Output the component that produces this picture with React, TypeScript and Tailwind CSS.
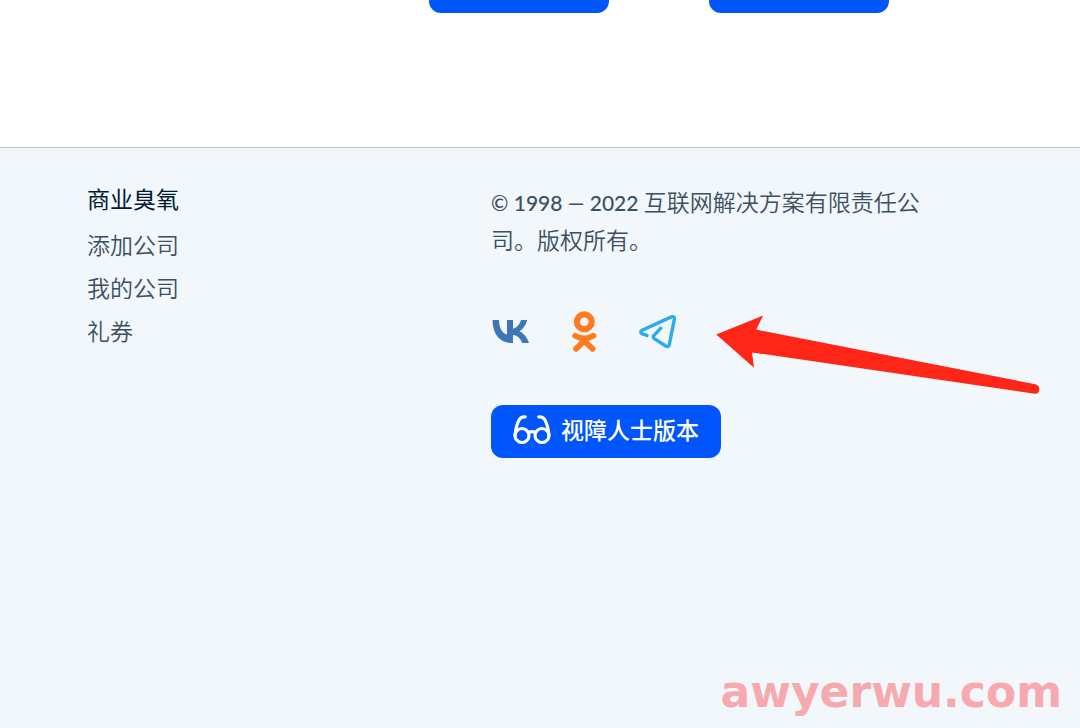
import React from "react";

const companyLinks = ["添加公司", "我的公司", "礼券"];

function VkIcon() {
  return (
    <svg viewBox="0 0 40 44" className="h-11 w-10" fill="#3f76b8" aria-hidden="true">
      <path d="M1.5 10H8C8.2 18.5 11.3 23.2 16 24.6V10h6v8.7C25.6 18 28.6 14.6 30 10h6.2c-1 4.8-4 8.9-7.7 11.2 4.4 2 7.8 6.2 9.5 11.8h-6.8c-1.5-4.3-4.8-7.4-9.2-7.9V33h-.8C9.5 33 1.8 25.2 1.5 10z" />
    </svg>
  );
}

function OkIcon() {
  return (
    <svg viewBox="0 0 40 44" className="h-11 w-10" fill="none" stroke="#ff7b22" strokeLinecap="round" strokeLinejoin="round" aria-hidden="true">
      <circle cx="20.3" cy="11.8" r="7.4" strokeWidth="6.2" />
      <path d="M11.2 25.7Q20.3 31 29.4 25.7M12 38.8l8.3-8 8.3 8" strokeWidth="5.8" />
    </svg>
  );
}

function TelegramIcon() {
  return (
    <svg viewBox="0 0 40 44" className="h-11 w-10" fill="none" stroke="#2aabee" strokeWidth="3.4" strokeLinecap="round" strokeLinejoin="round" aria-hidden="true">
      <path d="M10 25.4l-4.7-1.5C3.4 23.2 3.3 21.2 5 20.3L34.5 6.9c1.8-.8 3.2.2 2.9 2.1l-5.1 25.6c-.4 2-2 2.4-3.5 1.4l-11.2-7.1c-1.5-1-1.7-2.2-.6-3.5l6.8-7.2" />
    </svg>
  );
}

function GlassesIcon() {
  return (
    <svg viewBox="0 0 38 30" className="h-[30px] w-[38px]" fill="none" stroke="#fff" strokeWidth="3.2" strokeLinecap="round" aria-hidden="true">
      <circle cx="9" cy="20.5" r="7" />
      <circle cx="29" cy="20.5" r="7" />
      <path d="M15.6 17.8Q19 15.6 22.4 17.8M2 20C2.8 13 4.2 8.2 6.2 4.7 7.4 2.6 9.4 1.6 12.2 1.8M36 20C35.2 13 33.8 8.2 31.8 4.7 30.6 2.6 28.6 1.6 25.8 1.8" />
    </svg>
  );
}

const socials = [
  { name: "VK", Icon: VkIcon },
  { name: "Odnoklassniki", Icon: OkIcon },
  { name: "Telegram", Icon: TelegramIcon },
];

export default function App() {
  return (
    <div className="flex min-h-screen flex-col bg-white font-['Noto_Sans_CJK_SC',sans-serif] text-[23px] font-[350] text-[#3c4f62]">
      <main className="flex gap-[100px] pb-[134px] pl-[429px]">
        <button type="button" aria-label="了解更多" className="h-[13px] w-[180px] rounded-b-xl bg-[#0055fb]" />
        <button type="button" aria-label="联系我们" className="h-[13px] w-[180px] rounded-b-xl bg-[#0055fb]" />
      </main>

      <footer className="relative flex flex-1 border-t border-[#bcc7d1] bg-[#f1f7fa] pl-[87px]">
        <nav className="w-[404px] shrink-0 pt-8">
          <h2 className="font-normal leading-9 text-[#001a34]">商业臭氧</h2>
          <ul className="mt-[10px] flex flex-col gap-[7px]">
            {companyLinks.map((label) => (
              <li key={label} className="leading-9">
                <a href="#">{label}</a>
              </li>
            ))}
          </ul>
        </nav>

        <section className="flex-1 pt-[35px]">
          <p className="max-w-[450px] leading-9">
            <span className="font-['Lato',sans-serif] text-[21px] font-medium">© 1998 — 2022 </span>
            互联网解决方案有限责任公司。版权所有。
          </p>
          <div className="mt-[53px] flex gap-[33px]">
            {socials.map(({ name, Icon }) => (
              <a key={name} href="#" aria-label={name}>
                <Icon />
              </a>
            ))}
          </div>
          <button type="button" className="mt-[51px] flex h-[53px] w-[230px] items-center justify-center gap-[10px] rounded-xl bg-[#0055fb] pb-1 font-medium text-white">
            <GlassesIcon />
            <span>视障人士版本</span>
          </button>
        </section>

        <svg viewBox="0 0 324 80" className="absolute left-[716px] top-[166px] h-20 w-[324px]" fill="#ff2517" aria-hidden="true">
          <path d="M.3 20.4L47.2 1.4 40.2 15.6 319.3 70.2C322.5 71 323.6 73.3 323.2 75.8 322.8 78.6 321.4 80.2 318.8 79.8L36 38.4 38 53.7z" />
        </svg>

        <p className="absolute bottom-0 right-[18px] font-['DejaVu_Sans',sans-serif] text-[44px] font-bold leading-[72px] text-[#f6aaaf]">awyerwu.com</p>
      </footer>
    </div>
  );
}
